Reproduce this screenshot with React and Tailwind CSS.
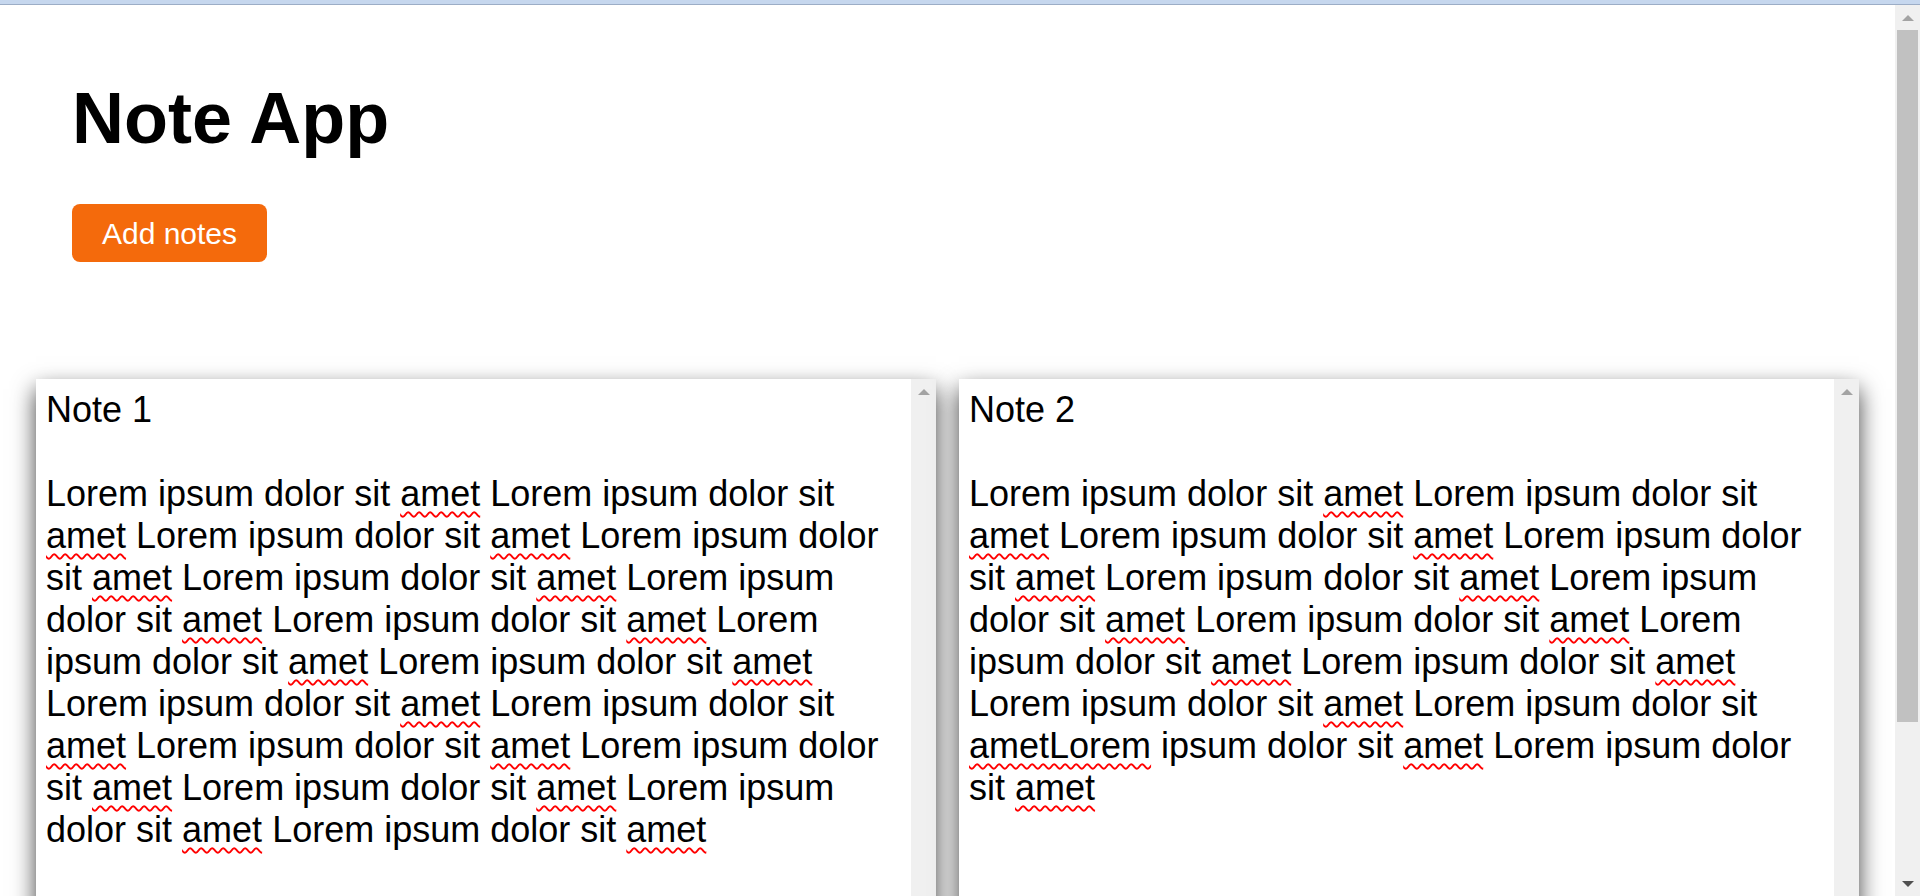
import React from 'react';

// spellcheck-style squiggle under "amet"
const Amet = ({ children = 'amet' }) => (
  <span className="underline decoration-wavy decoration-[#ff0000] decoration-[1.5px] underline-offset-[5px]">
    {children}
  </span>
);

const Body = ({ count }) => {
  const parts = [];
  for (let i = 0; i < count; i++) {
    parts.push(
      <React.Fragment key={i}>
        {i > 0 ? ' ' : ''}Lorem ipsum dolor sit <Amet />
      </React.Fragment>
    );
  }
  return <>{parts}</>;
};

const UpArrow = () => (
  <div className="w-0 h-0 border-x-[6px] border-x-transparent border-b-[6px] border-b-[#a3a3a3]" />
);

const Note = ({ title, children }) => (
  <div className="flex w-[900px] h-[600px] bg-white shadow-[0_10px_22px_rgba(0,0,0,0.75)]">
    <div className="flex-1 min-w-0 p-[10px] text-[36px] text-black leading-[42px]">
      <div>{title}</div>
      <div className="h-[42px]" />
      <div>{children}</div>
    </div>
    <div className="w-[25px] bg-[#f0f0f0] flex flex-col items-center pt-[10px]">
      <UpArrow />
    </div>
  </div>
);

const App = () => {
  return (
    <div className="h-screen overflow-hidden flex flex-col bg-white font-['Liberation_Sans',Arial,sans-serif]">
      <div className="h-[5px] bg-[#c6d7ee] border-b border-[#9cadc6]" />
      <div className="flex flex-1 min-h-0">
        <main className="flex-1 min-w-0 overflow-hidden">
          <div className="pl-[72px]">
            <h1 className="mt-[72px] text-[72px] font-bold leading-[83px] text-black">Note App</h1>
            <button className="mt-[44px] w-[195px] h-[58px] rounded-lg bg-[#f46a0c] text-white text-[30px] flex items-center justify-center">
              Add notes
            </button>
          </div>
          <div className="mt-[117px] flex justify-center gap-[23px]">
            <Note title="Note 1">
              <Body count={16} />
            </Note>
            <Note title="Note 2">
              <Body count={9} />{' '}Lorem ipsum dolor sit <Amet /> Lorem ipsum dolor sit{' '}
              <Amet>ametLorem</Amet> ipsum dolor sit <Amet /> Lorem ipsum dolor sit <Amet />
            </Note>
          </div>
        </main>
        <div className="w-[25px] bg-[#f0f0f0] flex flex-col items-center">
          <div className="h-[25px] flex items-center justify-center">
            <UpArrow />
          </div>
          <div className="w-[21px] h-[692px] bg-[#c1c1c1]" />
          <div className="flex-1" />
          <div className="h-[25px] flex items-center justify-center">
            <div className="w-0 h-0 border-x-[6px] border-x-transparent border-t-[6px] border-t-[#505050]" />
          </div>
        </div>
      </div>
    </div>
  );
};

export default App;
